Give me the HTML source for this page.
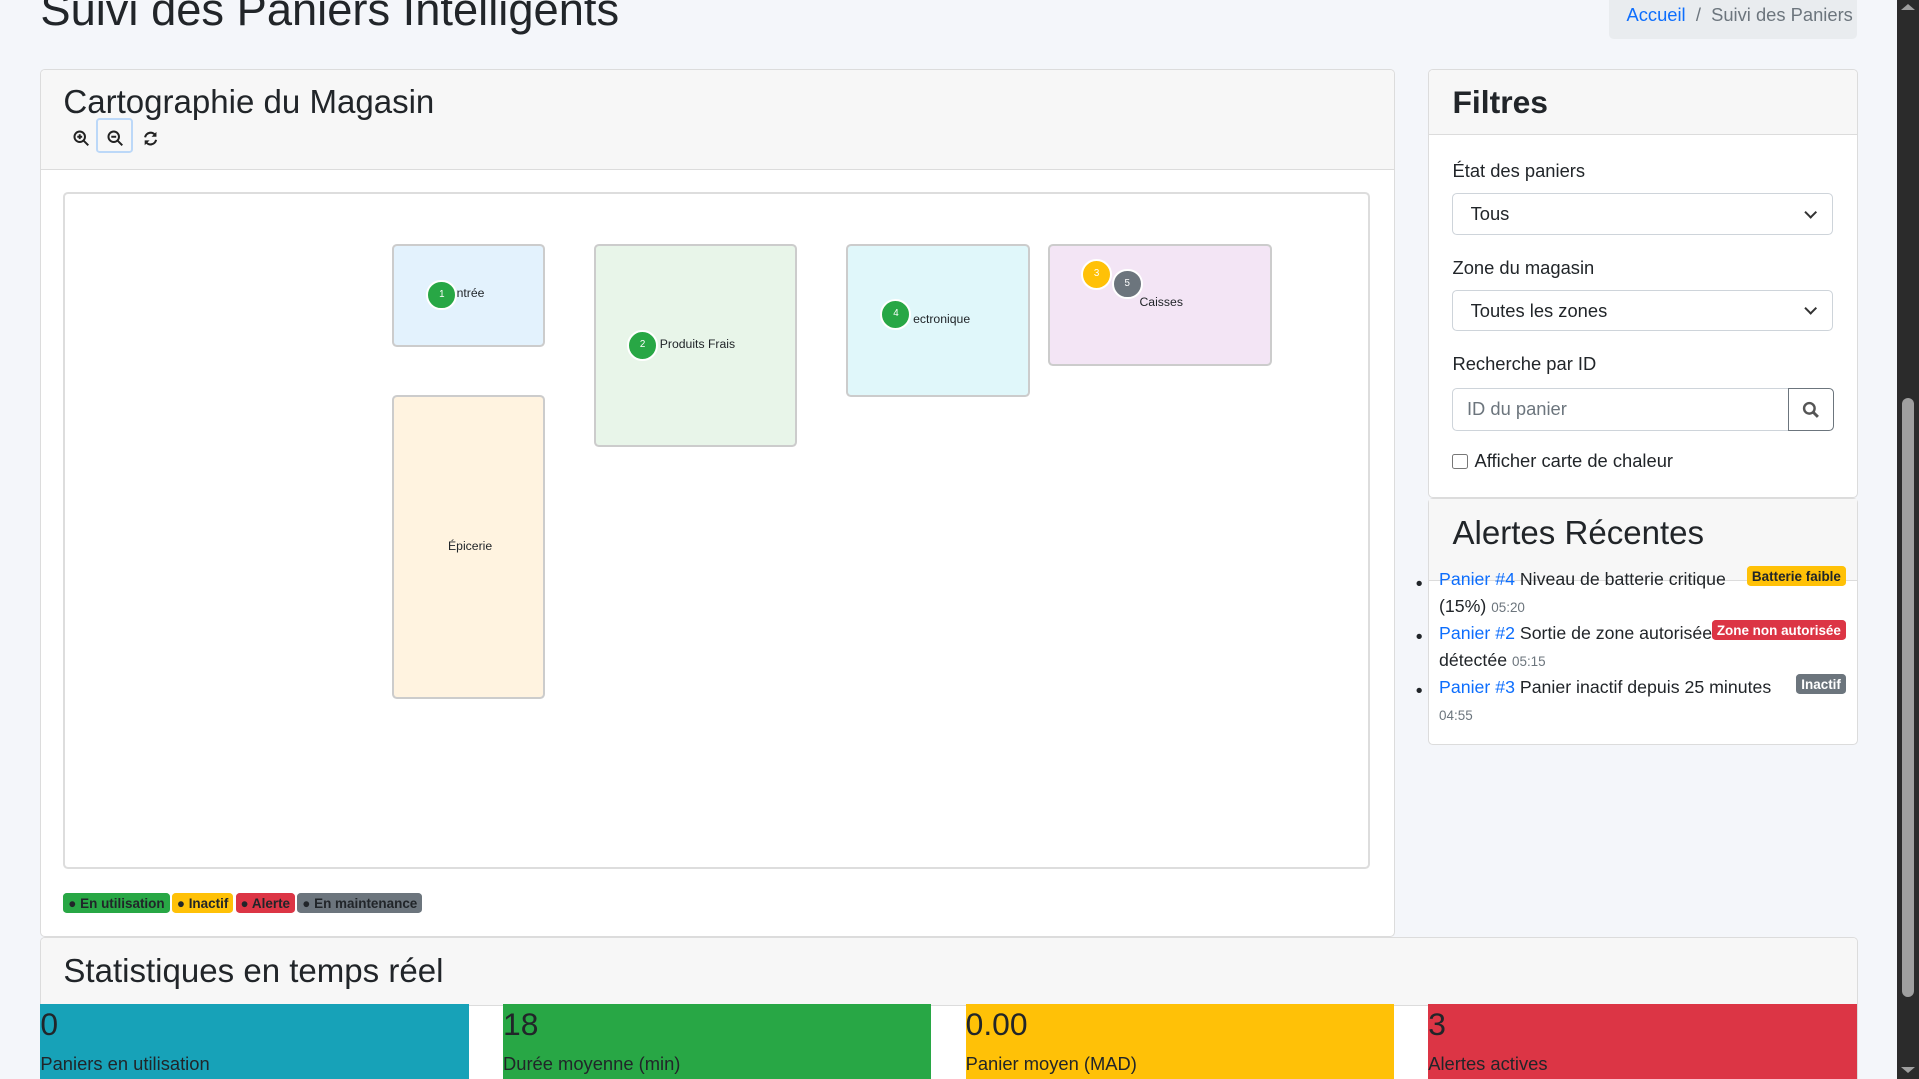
<!DOCTYPE html>
<html><head><meta charset="utf-8"><style>
html,body{margin:0;padding:0;overflow:hidden;background:#f4f6fa;}
#w{position:relative;width:1568px;height:882px;zoom:1.22386;font-family:"Liberation Sans",sans-serif;color:#212529;}
.a{position:absolute;}
.card{position:absolute;background:#fff;border:1px solid #dcdcdc;border-radius:4px;box-sizing:border-box;overflow:hidden;}
.hd{background:#f7f7f7;border-bottom:1px solid #dcdcdc;}
.zone{position:absolute;border:2px solid #ccc;border-radius:4px;box-sizing:border-box;font-size:10px;}
.mk{position:absolute;width:22px;height:22px;border-radius:50%;border:2px solid #fff;color:#fff;font-size:8px;text-align:center;line-height:22px;box-sizing:content-box;}
.bd{display:inline-block;font-size:11px;font-weight:bold;padding:2px 4px;border-radius:3px;margin-right:2px;}
.sel{position:absolute;left:19px;width:311px;height:34px;border:1px solid #ced4da;border-radius:4px;box-sizing:border-box;font-size:15px;line-height:32px;padding-left:14px;}
.sel:after{content:"";position:absolute;right:14px;top:11px;width:6px;height:6px;border-right:2px solid #333;border-bottom:2px solid #333;transform:rotate(45deg);}
.lbl{position:absolute;left:19px;font-size:15px;}
.al{position:absolute;left:8px;font-size:14.5px;line-height:22px;width:330px;}
.al a{color:#0d6efd;text-decoration:none}
.al small{font-size:11px;color:#6c757d}
.st{position:absolute;top:820px;height:62px;width:350px;}
.st b{position:absolute;left:0;top:2px;font-size:26px;font-weight:normal;}
.st span{position:absolute;left:0;top:40px;font-size:15px;}
</style></head><body><div id="w">
<div class="a" style="left:33px;top:-13px;font-size:37px;">Suivi des Paniers Intelligents</div>
<div class="a" style="left:1315px;top:0;width:202px;height:32px;background:#e9ecef;border-radius:0 0 4px 4px;font-size:15px;line-height:24px;"><span style="margin-left:14px;color:#0d6efd">Accueil</span><span style="color:#6c757d"> &nbsp;/&nbsp; Suivi des Paniers</span></div>

<div class="card" style="left:33px;top:56px;width:1107px;height:710px;">
<div class="hd" style="height:81px;position:relative;">
<div class="a" style="left:18px;top:12px;font-size:27px;">Cartographie du Magasin</div>
<svg class="a" style="left:26px;top:49px" width="14" height="14" viewBox="0 0 14 14"><circle cx="5.5" cy="5.5" r="4.3" fill="none" stroke="#222" stroke-width="1.6"/><path d="M8.5 8.5L12.5 12.5M3.5 5.5h4M5.5 3.5v4" stroke="#222" stroke-width="1.6"/></svg>
<div class="a" style="left:45px;top:40px;width:30px;height:28px;border:2px solid #bcd8f8;border-radius:3px;box-sizing:border-box;"></div>
<svg class="a" style="left:54px;top:49px" width="14" height="14" viewBox="0 0 14 14"><circle cx="5.5" cy="5.5" r="4.3" fill="none" stroke="#222" stroke-width="1.6"/><path d="M8.5 8.5L12.5 12.5M3.5 5.5h4" stroke="#222" stroke-width="1.6"/></svg>
<svg class="a" style="left:82px;top:49px" width="14" height="14" viewBox="0 0 14 14"><path d="M2.5 6A4.6 4.6 0 0 1 11 4.5M11.5 8A4.6 4.6 0 0 1 3 9.5" fill="none" stroke="#222" stroke-width="1.7"/><path d="M11.8 1.5v4h-4zM2.2 12.5v-4h4z" fill="#222"/></svg>
</div>
<div class="a" style="left:18px;top:100px;width:1068px;height:553px;border:2px solid #ddd;border-radius:4px;box-sizing:border-box;">
<div class="zone" style="left:267px;top:41px;width:125px;height:84px;background:#e3f2fd;"><span class="a" style="left:51px;top:33px">ntrée</span></div>
<div class="zone" style="left:267px;top:164px;width:125px;height:249px;background:#fff3e0;"><span class="a" style="left:44px;top:116px">Épicerie</span></div>
<div class="zone" style="left:432px;top:41px;width:166px;height:166px;background:#e8f5e9;"><span class="a" style="left:52px;top:74px">Produits Frais</span></div>
<div class="zone" style="left:638px;top:41px;width:150px;height:125px;background:#e0f7fa;"><span class="a" style="left:53px;top:54px">ectronique</span></div>
<div class="zone" style="left:803px;top:41px;width:183px;height:100px;background:#f3e5f5;"><span class="a" style="left:73px;top:40px">Caisses</span></div>
<div class="mk" style="left:295px;top:70px;background:#28a745">1</div>
<div class="mk" style="left:459px;top:111px;background:#28a745">2</div>
<div class="mk" style="left:666px;top:86px;background:#28a745">4</div>
<div class="mk" style="left:830px;top:53px;background:#ffc107">3</div>
<div class="mk" style="left:855px;top:61px;background:#6c757d">5</div>
</div>
<div class="a" style="left:18px;top:671px;white-space:nowrap"><span class="bd" style="background:#28a745">● En utilisation</span><span class="bd" style="background:#ffc107">● Inactif</span><span class="bd" style="background:#dc3545">● Alerte</span><span class="bd" style="background:#6c757d">● En maintenance</span></div>
</div>

<div class="card" style="left:1167px;top:56px;width:351px;height:351px;">
<div class="hd" style="height:53px;position:relative;"><div class="a" style="left:19px;top:12px;font-size:26px;font-weight:bold;">Filtres</div></div>
<div class="lbl" style="top:74px">État des paniers</div>
<div class="sel" style="top:101px">Tous</div>
<div class="lbl" style="top:153px">Zone du magasin</div>
<div class="sel" style="top:180px">Toutes les zones</div>
<div class="lbl" style="top:232px">Recherche par ID</div>
<div class="a" style="left:19px;top:260px;width:275px;height:35px;border:1px solid #ced4da;border-radius:4px 0 0 4px;box-sizing:border-box;font-size:15px;line-height:33px;padding-left:11px;color:#6c757d">ID du panier</div>
<div class="a" style="left:293px;top:260px;width:38px;height:35px;border:1px solid #6c757d;border-radius:0 4px 4px 0;box-sizing:border-box;"><svg class="a" style="left:11px;top:10px" width="15" height="15" viewBox="0 0 15 15"><circle cx="6" cy="6" r="4.3" fill="none" stroke="#555" stroke-width="2"/><path d="M9.3 9.3L13 13" stroke="#555" stroke-width="2.4"/></svg></div>
<div class="a" style="left:19px;top:314px;width:11px;height:11px;border:1px solid #777;border-radius:2px;"></div>
<div class="a" style="left:37px;top:311px;font-size:15px;">Afficher carte de chaleur</div>
</div>

<div class="card" style="left:1167px;top:407px;width:351px;height:202px;overflow:visible;">
<div class="hd" style="height:66px;position:relative;"><div class="a" style="left:19px;top:13px;font-size:27px;">Alertes Récentes</div></div>
<div class="a" style="left:-11px;top:60px;font-size:16px">•</div><div class="a" style="left:-11px;top:104px;font-size:16px">•</div><div class="a" style="left:-11px;top:148px;font-size:16px">•</div>
<div class="al" style="top:55px"><a>Panier #4</a> Niveau de batterie critique<br>(15%) <small>05:20</small></div>
<div class="al" style="top:99px"><a>Panier #2</a> Sortie de zone autorisée<br>détectée <small>05:15</small></div>
<div class="al" style="top:143px"><a>Panier #3</a> Panier inactif depuis 25 minutes<br><small>04:55</small></div>
<span class="bd a" style="right:7px;top:55px;background:#ffc107;font-size:11px">Batterie faible</span>
<span class="bd a" style="right:7px;top:99px;background:#dc3545;color:#fff">Zone non autorisée</span>
<span class="bd a" style="right:7px;top:143px;background:#6c757d;color:#fff">Inactif</span>
</div>

<div class="card" style="left:33px;top:766px;width:1485px;height:130px;border-bottom:none;">
<div class="hd" style="height:54px;position:relative;"><div class="a" style="left:18px;top:12px;font-size:27px;">Statistiques en temps réel</div></div>
</div>
<div class="st" style="left:33px;background:#17a2b8"><b>0</b><span>Paniers en utilisation</span></div>
<div class="st" style="left:411px;background:#28a745"><b>18</b><span>Durée moyenne (min)</span></div>
<div class="st" style="left:789px;background:#ffc107"><b>0.00</b><span>Panier moyen (MAD)</span></div>
<div class="st" style="left:1167px;background:#dc3545"><b>3</b><span>Alertes actives</span></div>

<div class="a" style="left:1550px;top:0;width:18px;height:882px;background:#2b2b2b"></div>
<div class="a" style="left:1554px;top:325px;width:10px;height:490px;background:#9f9f9f;border-radius:5px"></div>
<div class="a" style="left:1553px;top:3px;width:0;height:0;border-left:6px solid transparent;border-right:6px solid transparent;border-bottom:5px solid #9f9f9f"></div>
<div class="a" style="left:1553px;top:872px;width:0;height:0;border-left:6px solid transparent;border-right:6px solid transparent;border-top:5px solid #9f9f9f"></div>
</div></body></html>
